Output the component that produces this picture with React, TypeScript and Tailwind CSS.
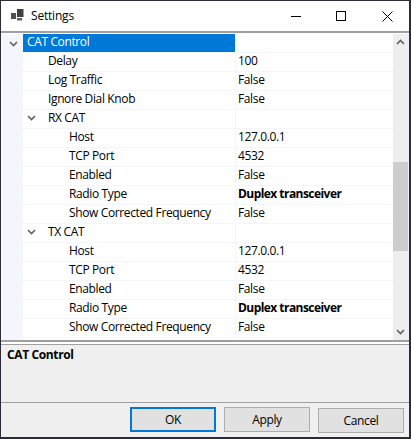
const rows = [
  { name: "CAT Control", value: "", indent: 0, group: true, selected: true },
  { name: "Delay", value: "100", indent: 1 },
  { name: "Log Traffic", value: "False", indent: 1 },
  { name: "Ignore Dial Knob", value: "False", indent: 1 },
  { name: "RX CAT", value: "", indent: 1, group: true },
  { name: "Host", value: "127.0.0.1", indent: 2 },
  { name: "TCP Port", value: "4532", indent: 2 },
  { name: "Enabled", value: "False", indent: 2 },
  { name: "Radio Type", value: "Duplex transceiver", indent: 2, bold: true },
  { name: "Show Corrected Frequency", value: "False", indent: 2 },
  { name: "TX CAT", value: "", indent: 1, group: true },
  { name: "Host", value: "127.0.0.1", indent: 2 },
  { name: "TCP Port", value: "4532", indent: 2 },
  { name: "Enabled", value: "False", indent: 2 },
  { name: "Radio Type", value: "Duplex transceiver", indent: 2, bold: true },
  { name: "Show Corrected Frequency", value: "False", indent: 2 },
];

function Chevron({ up = false }: { up?: boolean }) {
  return (
    <svg width="9" height="6" viewBox="0 0 9 6" className={up ? "rotate-180" : ""}>
      <path d="M1 1 L4.5 4.5 L8 1" fill="none" stroke="#606060" strokeWidth="1.6" />
    </svg>
  );
}

function Row({ row }: { row: (typeof rows)[number] }) {
  const padding = row.indent === 0 ? "pl-[4px]" : row.indent === 1 ? "pl-[25px]" : "pl-[46px]";
  return (
    <div className="flex h-[19px] items-stretch">
      <div className={`flex w-[212px] items-center border-b border-[#f3f6fb] pb-[2px] ${padding} ${row.selected ? "bg-[#0078d7] text-white" : ""}`}>
        {row.group && row.indent === 1 && (
          <span className="ml-[-21px] mr-[12px] flex w-[9px]">
            <Chevron />
          </span>
        )}
        <span>{row.name}</span>
      </div>
      <div className={`flex flex-1 items-center border-b border-l border-[#f3f6fb] pb-[2px] pl-[2px] ${row.bold ? "font-bold tracking-[-0.55px]" : ""}`}>
        {row.value}
      </div>
    </div>
  );
}

function DialogButton({ label, primary = false, className = "" }: { label: string; primary?: boolean; className?: string }) {
  return (
    <button className={`h-[25px] w-[86px] bg-[#e1e1e1] text-[12px] text-black ${primary ? "border-2 border-[#0078d7]" : "border border-[#adadad]"} ${className}`}>
      {label}
    </button>
  );
}

export default function App() {
  return (
    <div className="flex h-[439px] w-[411px] flex-col border border-b-2 border-r-2 border-[#2b2b3a] bg-[#f0f0f0] font-['Open_Sans',sans-serif] text-[12px] leading-none tracking-[-0.37px] text-black">
      {/* Title bar */}
      <div className="flex h-[30px] items-center bg-white">
        <svg width="16" height="16" viewBox="0 0 16 16" className="ml-[10px]">
          <rect x="0" y="5" width="5" height="6" fill="#505050" />
          <rect x="6" y="1" width="6.5" height="8" fill="#404040" />
          <rect x="6" y="10" width="5" height="2.5" fill="#606060" />
        </svg>
        <span className="ml-[4px] text-[12px] tracking-[-0.2px]">Settings</span>
        <div className="ml-auto flex items-center">
          <div className="flex w-[42px] justify-center">
            <div className="h-px w-[10px] bg-black" />
          </div>
          <div className="flex w-[48px] justify-center">
            <div className="h-[10px] w-[10px] border border-black" />
          </div>
          <div className="flex w-[44px] justify-center">
            <svg width="11" height="11" viewBox="0 0 11 11">
              <path d="M0.5 0.5 L10.5 10.5 M10.5 0.5 L0.5 10.5" stroke="#000" strokeWidth="1" />
            </svg>
          </div>
        </div>
      </div>
      <div className="h-[2px] bg-[#a0a0a0]" />

      {/* Property grid */}
      <div className="flex h-[307px] bg-white pt-px">
        <div className="ml-px w-[21px] shrink-0 bg-[#f3f6fb] pl-[7px] pt-[7px]">
          <Chevron />
        </div>
        <div className="flex-1">
          {rows.map((row, i) => (
            <Row key={i} row={row} />
          ))}
        </div>
        <div className="flex w-[16px] shrink-0 flex-col bg-[#eeeeee] pb-[5px] pt-[5px]">
          <div className="flex justify-center pr-px">
            <Chevron up />
          </div>
          <div className="mt-[117px] h-[89px] w-[15px] bg-[#cdcdcd]" />
          <div className="mt-auto flex justify-center pr-px">
            <Chevron />
          </div>
        </div>
      </div>

      <div className="h-[2px] bg-[#a0a0a0]" />
      <div className="h-[2px] bg-white" />

      {/* Help panel */}
      <div className="h-[59px] border-y border-[#a0a0a0] px-[6px] pt-[4px] font-bold">CAT Control</div>

      {/* Buttons */}
      <div className="flex flex-1 items-start justify-end gap-[8px] pr-[5px] pt-[4px]">
        <DialogButton label="OK" primary />
        <DialogButton label="Apply" />
        <DialogButton label="Cancel" className="mt-px" />
      </div>
    </div>
  );
}
